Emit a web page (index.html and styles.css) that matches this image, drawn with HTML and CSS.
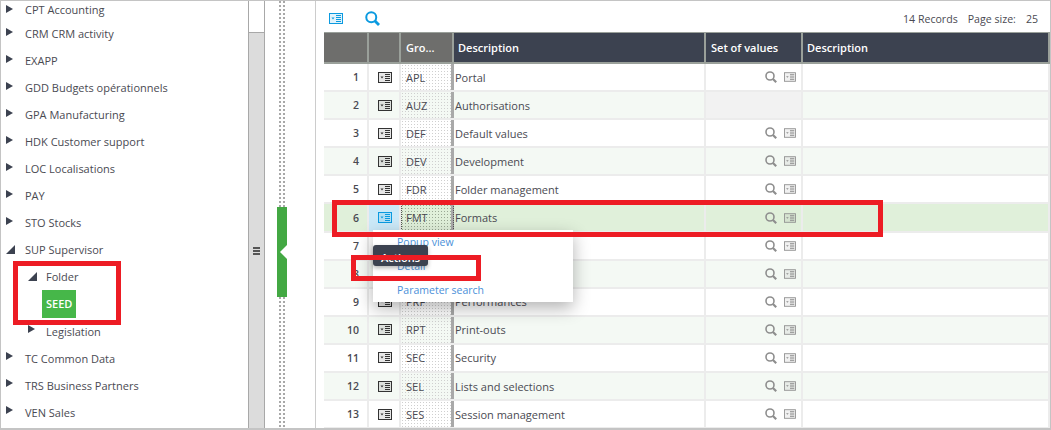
FILE: index.html
```html
<!DOCTYPE html>
<html lang="en">
<head>
    <meta charset="UTF-8">
    <title>Parameter groups</title>
    <link rel="stylesheet" href="styles.css">
</head>
<body>
    <svg class="defs" width="0" height="0">
        <symbol id="form" viewBox="0 0 14 11">
            <rect x="0.5" y="0.5" width="13" height="10" fill="currentColor" fill-opacity="0.12" stroke="currentColor"/>
            <path d="M2.5 4.5h3l-1.5 2z" fill="currentColor"/>
            <path d="M7 2.5h5M7 4.5h5M7 6.5h5M7 8.5h5" stroke="currentColor" fill="none"/>
        </symbol>
        <symbol id="loupe" viewBox="0 0 12 12">
            <circle cx="5" cy="5" r="4" fill="none" stroke="currentColor" stroke-width="1.6"/>
            <path d="M8 8l3.2 3.2" stroke="currentColor" stroke-width="2.2" fill="none"/>
        </symbol>
    </svg>

    <div class="app">
        <!-- Tree -->
        <nav class="tree">
            <div class="node first"><i class="closed"></i>CPT Accounting</div>
            <div class="node"><i class="closed"></i>CRM CRM activity</div>
            <div class="node"><i class="closed"></i>EXAPP</div>
            <div class="node"><i class="closed"></i>GDD Budgets opérationnels</div>
            <div class="node"><i class="closed"></i>GPA Manufacturing</div>
            <div class="node"><i class="closed"></i>HDK Customer support</div>
            <div class="node"><i class="closed"></i>LOC Localisations</div>
            <div class="node"><i class="closed"></i>PAY</div>
            <div class="node"><i class="closed"></i>STO Stocks</div>
            <div class="node"><i class="open"></i>SUP Supervisor</div>
            <div class="node sub"><i class="open"></i>Folder</div>
            <div class="node leaf"><span class="seed">SEED</span></div>
            <div class="node sub"><i class="closed"></i>Legislation</div>
            <div class="node"><i class="closed"></i>TC Common Data</div>
            <div class="node"><i class="closed"></i>TRS Business Partners</div>
            <div class="node"><i class="closed"></i>VEN Sales</div>
        </nav>

        <div class="scrollbar">
            <div class="thumb"><span class="grip"></span></div>
        </div>

        <div class="splitter">
            <div class="dots dots-top"></div>
            <div class="handle"><span class="notch"></span></div>
            <div class="dots"></div>
        </div>

        <!-- Grid -->
        <main class="content">
            <div class="toolbar">
                <svg class="tool-form"><use href="#form"/></svg>
                <svg class="tool-loupe"><use href="#loupe"/></svg>
                <div class="paging"><span>14 Records</span><span>Page size:</span><span>25</span></div>
            </div>

            <div class="row head">
                <div class="cell grey"></div>
                <div class="cell grey"></div>
                <div class="cell grey">Gro...</div>
                <div class="cell">Description</div>
                <div class="cell">Set of values</div>
                <div class="cell">Description</div>
            </div>

            <div class="row">
                <div class="cell num">1</div>
                <div class="cell act"><svg class="ico"><use href="#form"/></svg></div>
                <div class="cell code">APL</div>
                <div class="cell">Portal</div>
                <div class="cell vals"><svg class="lo"><use href="#loupe"/></svg><svg class="fo"><use href="#form"/></svg></div>
                <div class="cell"></div>
            </div>
            <div class="row alt">
                <div class="cell num">2</div>
                <div class="cell act"><svg class="ico"><use href="#form"/></svg></div>
                <div class="cell code">AUZ</div>
                <div class="cell">Authorisations</div>
                <div class="cell vals empty"></div>
                <div class="cell"></div>
            </div>
            <div class="row">
                <div class="cell num">3</div>
                <div class="cell act"><svg class="ico"><use href="#form"/></svg></div>
                <div class="cell code">DEF</div>
                <div class="cell">Default values</div>
                <div class="cell vals"><svg class="lo"><use href="#loupe"/></svg><svg class="fo"><use href="#form"/></svg></div>
                <div class="cell"></div>
            </div>
            <div class="row alt">
                <div class="cell num">4</div>
                <div class="cell act"><svg class="ico"><use href="#form"/></svg></div>
                <div class="cell code">DEV</div>
                <div class="cell">Development</div>
                <div class="cell vals"><svg class="lo"><use href="#loupe"/></svg><svg class="fo"><use href="#form"/></svg></div>
                <div class="cell"></div>
            </div>
            <div class="row">
                <div class="cell num">5</div>
                <div class="cell act"><svg class="ico"><use href="#form"/></svg></div>
                <div class="cell code">FDR</div>
                <div class="cell">Folder management</div>
                <div class="cell vals"><svg class="lo"><use href="#loupe"/></svg><svg class="fo"><use href="#form"/></svg></div>
                <div class="cell"></div>
            </div>
            <div class="row selected">
                <div class="cell num">6</div>
                <div class="cell act"><svg class="ico"><use href="#form"/></svg></div>
                <div class="cell code">FMT</div>
                <div class="cell">Formats</div>
                <div class="cell vals"><svg class="lo"><use href="#loupe"/></svg><svg class="fo"><use href="#form"/></svg></div>
                <div class="cell"></div>
            </div>
            <div class="row">
                <div class="cell num">7</div>
                <div class="cell act"><svg class="ico"><use href="#form"/></svg></div>
                <div class="cell code"></div>
                <div class="cell"></div>
                <div class="cell vals"><svg class="lo"><use href="#loupe"/></svg><svg class="fo"><use href="#form"/></svg></div>
                <div class="cell"></div>
            </div>
            <div class="row alt">
                <div class="cell num">8</div>
                <div class="cell act"><svg class="ico"><use href="#form"/></svg></div>
                <div class="cell code"></div>
                <div class="cell"></div>
                <div class="cell vals"><svg class="lo"><use href="#loupe"/></svg><svg class="fo"><use href="#form"/></svg></div>
                <div class="cell"></div>
            </div>
            <div class="row">
                <div class="cell num">9</div>
                <div class="cell act"><svg class="ico"><use href="#form"/></svg></div>
                <div class="cell code">PRF</div>
                <div class="cell">Performances</div>
                <div class="cell vals"><svg class="lo"><use href="#loupe"/></svg><svg class="fo"><use href="#form"/></svg></div>
                <div class="cell"></div>
            </div>
            <div class="row alt">
                <div class="cell num">10</div>
                <div class="cell act"><svg class="ico"><use href="#form"/></svg></div>
                <div class="cell code">RPT</div>
                <div class="cell">Print-outs</div>
                <div class="cell vals"><svg class="lo"><use href="#loupe"/></svg><svg class="fo"><use href="#form"/></svg></div>
                <div class="cell"></div>
            </div>
            <div class="row">
                <div class="cell num">11</div>
                <div class="cell act"><svg class="ico"><use href="#form"/></svg></div>
                <div class="cell code">SEC</div>
                <div class="cell">Security</div>
                <div class="cell vals"><svg class="lo"><use href="#loupe"/></svg><svg class="fo"><use href="#form"/></svg></div>
                <div class="cell"></div>
            </div>
            <div class="row alt">
                <div class="cell num">12</div>
                <div class="cell act"><svg class="ico"><use href="#form"/></svg></div>
                <div class="cell code">SEL</div>
                <div class="cell">Lists and selections</div>
                <div class="cell vals"><svg class="lo"><use href="#loupe"/></svg><svg class="fo"><use href="#form"/></svg></div>
                <div class="cell"></div>
            </div>
            <div class="row">
                <div class="cell num">13</div>
                <div class="cell act"><svg class="ico"><use href="#form"/></svg></div>
                <div class="cell code">SES</div>
                <div class="cell">Session management</div>
                <div class="cell vals"><svg class="lo"><use href="#loupe"/></svg><svg class="fo"><use href="#form"/></svg></div>
                <div class="cell"></div>
            </div>
        </main>

        <!-- Popup menu -->
        <div class="menu">
            <a href="#">Popup view</a>
            <a href="#">Detail</a>
            <a href="#">Parameter search</a>
        </div>
        <div class="tip">Actions</div>

        <!-- Red callouts -->
        <div class="mark mark-tree"></div>
        <div class="mark mark-row"></div>
        <div class="mark mark-detail"></div>
    </div>
</body>
</html>
```

FILE: styles.css
```css
/* General Styles */
body {
    font-family: "Open Sans", "Noto Sans", sans-serif;
    font-size: 11px;
    background-color: #fff;
    margin: 0;
    padding: 0;
    color: #4a4a52;
}

.defs {
    position: absolute;
}

.app {
    position: relative;
    display: flex;
    width: 1051px;
    height: 430px;
    box-sizing: border-box;
    border: 1px solid #c4c4c4;
    border-bottom-width: 2px;
    overflow: hidden;
}

/* Tree */
.tree {
    width: 247px;
    flex: none;
}

.node {
    display: flex;
    align-items: center;
    height: 27.05px;
    padding-left: 24px;
    position: relative;
}

.node.first {
    height: 17px;
    padding-bottom: 2px;
}

.node.sub {
    padding-left: 45px;
}

.node.leaf {
    padding-left: 41px;
}

.node i {
    position: absolute;
    left: 5px;
    top: 50%;
    margin-top: -6px;
    width: 0;
    height: 0;
}

.node.sub i {
    left: 27px;
}

.node i.open {
    margin-top: -5px;
}

.closed {
    border-top: 4px solid transparent;
    border-bottom: 4px solid transparent;
    border-left: 7px solid #3c4250;
}

.open {
    border-bottom: 9px solid #3c4250;
    border-left: 9px solid transparent;
}

.seed {
    background-color: #46b749;
    color: #fff;
    font-weight: 600;
    padding: 0 4px;
    width: 26px;
    height: 28px;
    line-height: 28px;
    text-align: center;
}

/* Scrollbar */
.scrollbar {
    width: 15px;
    flex: none;
    padding-top: 31px;
    border-left: 1px solid #a8a8a8;
    border-right: 1px solid #a8a8a8;
}

.thumb {
    height: 100%;
    display: flex;
    align-items: center;
    justify-content: center;
    background-color: #dcdcdc;
    border-top: 1px solid #a8a8a8;
}

.grip {
    width: 7px;
    height: 2px;
    background-color: #555;
    box-shadow: 0 3px 0 #555, 0 6px 0 #555;
    position: relative;
    top: 17px;
}

/* Splitter */
.splitter {
    width: 51px;
    flex: none;
    display: flex;
    flex-direction: column;
    align-items: center;
    padding-right: 16px;
    box-sizing: border-box;
    border-right: 1px solid #ccc;
}

.dots {
    flex: 1;
    width: 6px;
    background-image: radial-gradient(circle at 1px 1px, #a8a8a8 1.2px, transparent 1.2px);
    background-size: 4px 4px;
}

.dots-top {
    flex: none;
    height: 206px;
}

.handle {
    height: 90px;
    width: 10px;
    flex: none;
    background-color: #43a843;
    position: relative;
}

.notch {
    position: absolute;
    right: 0;
    top: 38px;
    border-top: 7px solid transparent;
    border-bottom: 7px solid transparent;
    border-right: 7px solid #fff;
}

/* Grid */
.content {
    flex: 1;
    min-width: 0;
    padding-left: 8px;
}

.toolbar {
    display: flex;
    align-items: center;
    height: 31px;
    box-sizing: border-box;
    padding-top: 3px;
}

.tool-form {
    width: 14px;
    height: 11px;
    color: #0b9ae0;
    margin-left: 5px;
}

.tool-loupe {
    width: 15px;
    height: 15px;
    color: #0b9ae0;
    margin-left: 22px;
}

.paging {
    margin-left: auto;
    display: flex;
    gap: 10px;
    margin-right: 12px;
    font-size: 10.6px;
    position: relative;
    top: 1px;
}

.row {
    display: grid;
    grid-template-columns: 45px 32px 53px 252px 97px 1fr;
    height: 28.1px;
    box-sizing: border-box;
    border-bottom: 2px solid #ececec;
}

.cell {
    display: flex;
    align-items: center;
    padding: 0 1px;
    border-right: 2px solid #ececec;
    min-width: 0;
}

.head {
    height: 32px;
    border-top: 1px solid #9aa09a;
    border-bottom: 2px solid #9aa09a;
    background-color: #3c4250;
    color: #fff;
    font-weight: 600;
}

.head .cell {
    border-right: 2px solid #9aa09a;
    padding-left: 4px;
}

.head .grey,
.head .cell:nth-child(5) {
    padding-left: 5px;
}

.head .grey {
    background-color: #6e6e6c;
}

.alt {
    background-color: #f4f9f4;
}

.selected {
    background-color: #e0f0da;
}

.num {
    justify-content: flex-end;
    padding-right: 8px;
    font-size: 10.5px;
    font-weight: 600;
}

.act {
    justify-content: center;
    padding-left: 2px;
    color: #333;
}

.ico {
    width: 14px;
    height: 11px;
}

.selected .act {
    background-color: #cbe9f8;
    color: #0b9ae0;
}

.code {
    padding-left: 5px;
    border-right: 3px solid #a9a9a9;
    background-image: radial-gradient(circle at 1.5px 1.5px, #cfcfcf 0.7px, transparent 0.7px);
    background-size: 3px 3px;
}

.selected .code {
    background-image: radial-gradient(circle at 1.5px 1.5px, #9aa894 0.7px, transparent 0.7px);
    outline: 1px dotted #555;
    outline-offset: -1px;
}

.vals {
    justify-content: flex-end;
    gap: 7px;
    padding-right: 5px;
    color: #8e8e8e;
}

.vals.empty {
    background-color: #f2f2f2;
}

.lo {
    width: 12px;
    height: 12px;
}

.fo {
    width: 12px;
    height: 10px;
}

/* Popup menu */
.menu {
    position: absolute;
    left: 372px;
    top: 229px;
    width: 200px;
    height: 72px;
    display: flex;
    flex-direction: column;
    justify-content: space-around;
    padding: 0 0 0 24px;
    box-sizing: border-box;
    background-color: #fff;
    font-size: 10.5px;
    box-shadow: 0 6px 16px rgba(0, 0, 0, 0.3);
}

.menu a {
    color: #4a90d9;
    text-decoration: none;
}

.tip {
    position: absolute;
    left: 372px;
    top: 244px;
    width: 55px;
    height: 21px;
    border-radius: 3px;
    background-color: #3c4250;
    color: #fff;
    font-weight: 600;
    text-align: center;
    line-height: 25px;
    overflow: hidden;
    box-shadow: 0 2px 4px rgba(0, 0, 0, 0.3);
}

/* Red callouts */
.mark {
    position: absolute;
    box-sizing: border-box;
    border: 5px solid #ed1c24;
}

.mark-tree {
    left: 12px;
    top: 260px;
    width: 108px;
    height: 64px;
}

.mark-row {
    left: 331px;
    top: 199px;
    width: 551px;
    height: 37px;
}

.mark-detail {
    left: 350px;
    top: 254px;
    width: 130px;
    height: 26px;
}
```
